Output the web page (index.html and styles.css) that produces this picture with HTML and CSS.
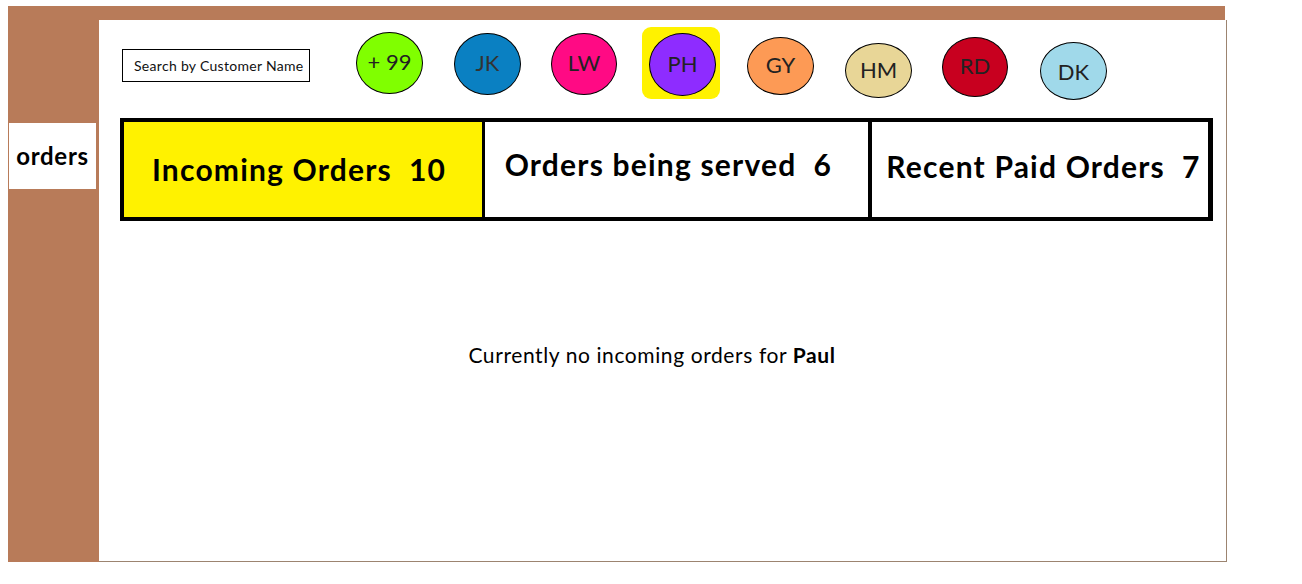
FILE: index.html
```html
<!DOCTYPE html>
<html>
<head>
<meta charset="utf-8">
<link rel="stylesheet" href="styles.css">
</head>
<body>
<div class="frame">
  <aside class="sidebar">
    <div class="nav-item">orders</div>
  </aside>
  <main class="panel">
    <div class="topbar">
      <div class="search">Search by Customer Name</div>
      <div class="avatar av-more">+ 99</div>
      <div class="avatar av-jk">JK</div>
      <div class="avatar av-lw">LW</div>
      <div class="avatar-active"><div class="avatar av-ph">PH</div></div>
      <div class="avatar av-gy">GY</div>
      <div class="avatar av-hm">HM</div>
      <div class="avatar av-rd">RD</div>
      <div class="avatar av-dk">DK</div>
    </div>
    <div class="tabs">
      <div class="tab tab-incoming">Incoming Orders&nbsp; 10</div>
      <div class="tab tab-serving">Orders being served&nbsp; 6</div>
      <div class="tab tab-paid">Recent Paid Orders&nbsp; 7</div>
    </div>
    <p class="empty">Currently no incoming orders for <b>Paul</b></p>
  </main>
</div>
</body>
</html>
```

FILE: styles.css
```css
* { box-sizing: border-box; }
html, body { margin: 0; padding: 0; background: #fff; }
body { font-family: Lato, "Open Sans", sans-serif; color: #000; }

.frame {
  display: flex;
  margin: 6px 0 0 8px;
  width: 1217px;
  height: 556px;
  padding-top: 14px;
  background: #b87b59;
}

.sidebar {
  width: 91px;
  flex: none;
  padding-top: 103px;
}
.nav-item {
  margin-left: 1px;
  width: 87px;
  height: 66px;
  background: #fff;
  font-weight: 700;
  font-size: 24px;
  letter-spacing: 0.7px;
  display: flex;
  align-items: center;
  justify-content: center;
  padding-bottom: 1px;
}

.panel {
  flex: none;
  width: 1128px;
  height: 542px;
  margin-right: -2px;
  background: #fff;
  border-right: 1px solid #9c8470;
  border-bottom: 1px solid #9c8470;
  padding: 7px 0 0 21px;
}

.topbar {
  display: flex;
  align-items: flex-start;
  height: 73px;
  padding-left: 2px;
}
.search {
  margin-top: 22px;
  width: 188px;
  height: 33px;
  border: 1px solid #000;
  font-size: 14px;
  letter-spacing: 0.3px;
  display: flex;
  align-items: center;
  padding-left: 11px;
  padding-bottom: 1px;
  color: #111;
  white-space: nowrap;
}
.avatar {
  width: 67px;
  height: 62px;
  border-radius: 50%;
  border: 1px solid #000;
  display: flex;
  align-items: center;
  justify-content: center;
  font-size: 22px;
  color: #222;
  padding-bottom: 3px;
  flex: none;
}
.av-more { margin: 5px 0 0 46px; background: #80ff00; }
.av-jk { margin: 6px 0 0 31px; background: #0a80c2; color: #333; }
.av-lw { margin: 6px 0 0 30px; background: #ff0a84; width: 66px; }
.avatar-active {
  margin-left: 25px;
  width: 78px;
  height: 72px;
  background: #fff200;
  border-radius: 9px;
  padding: 6px 0 0 7px;
  flex: none;
}
.av-ph { background: #8e2cff; height: 63px; }
.av-gy { margin: 10px 0 0 27px; height: 58px; background: #fd9a55; }
.av-hm { margin: 16px 0 0 31px; height: 55px; background: #e8d697; }
.av-rd { margin: 10px 0 0 30px; width: 66px; height: 60px; background: #c8001f; }
.av-dk { margin: 15px 0 0 32px; height: 58px; background: #a0d9ea; padding-top: 4px; }

.tabs {
  display: flex;
  margin-top: 18px;
  width: 1093px;
  height: 103px;
  border: 4px solid #000;
  border-right-width: 5px;
}
.tab {
  font-weight: 700;
  font-size: 30px;
  letter-spacing: 1.2px;
  display: flex;
  align-items: center;
  white-space: nowrap;
}
.tab-incoming {
  width: 358px;
  background: #fff200;
  padding-left: 28px;
  padding-bottom: 2px;
}
.tab-serving {
  width: 387px;
  border-left: 3px solid #000;
  padding-left: 20px;
  padding-bottom: 12px;
}
.tab-paid {
  width: 340px;
  border-left: 4px solid #000;
  padding-left: 14px;
  padding-bottom: 7px;
}

.empty {
  margin: 121px 0 0 0;
  padding-right: 42px;
  text-align: center;
  font-size: 21px;
  letter-spacing: 0.6px;
}
.empty b { font-weight: 700; }
```
